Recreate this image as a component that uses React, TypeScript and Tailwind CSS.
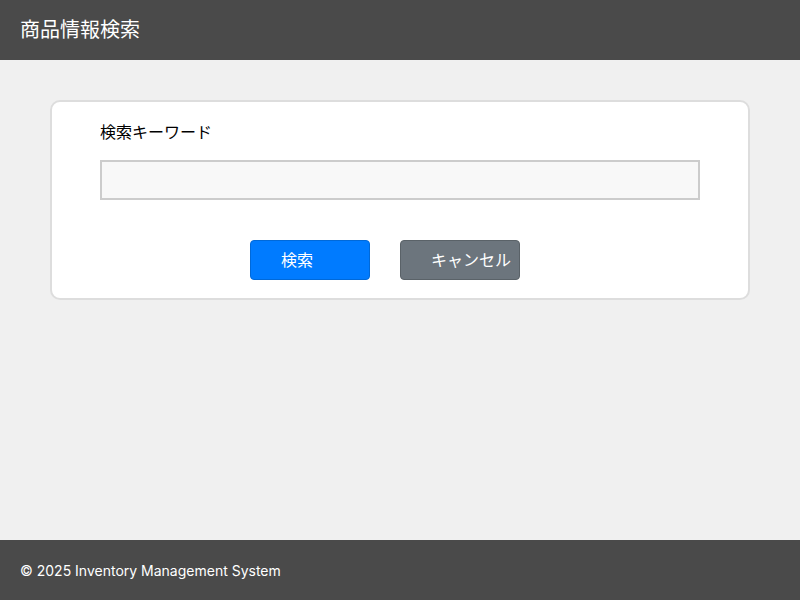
export default function App() {
  return (
    <div
      className="flex h-[600px] w-[800px] flex-col bg-[#f0f0f0]"
      style={{ fontFamily: 'Inter, "Noto Sans CJK JP", sans-serif' }}
    >
      <header className="flex h-[60px] shrink-0 items-center bg-[#4a4a4a] px-5 text-[20px] text-white">
        商品情報検索
      </header>
      <main className="flex-1 px-[50px] pt-[40px]">
        <div className="rounded-[10px] border-2 border-[#dddddd] bg-white px-[48px] pb-[18px] pt-[18px]">
          <div className="text-[16px] leading-[24px] text-black">検索キーワード</div>
          <div className="mt-4 h-10 w-full border-2 border-[#cccccc] bg-[#f8f8f8]"></div>
          <div className="mt-10 flex gap-[30px] pl-[150px]">
            <button className="h-10 w-[120px] overflow-visible whitespace-nowrap rounded-[4px] border border-[#0069d9] bg-[#007bff] pl-[30px] text-left text-[16px] text-white">
              検索
            </button>
            <button className="h-10 w-[120px] overflow-visible whitespace-nowrap rounded-[4px] border border-[#5a6268] bg-[#6c757d] pl-[30px] text-left text-[16px] text-white">
              キャンセル
            </button>
          </div>
        </div>
      </main>
      <footer className="flex h-[60px] shrink-0 items-center bg-[#4a4a4a] px-5 text-[14px] text-white">
        © 2025 Inventory Management System
      </footer>
    </div>
  );
}
